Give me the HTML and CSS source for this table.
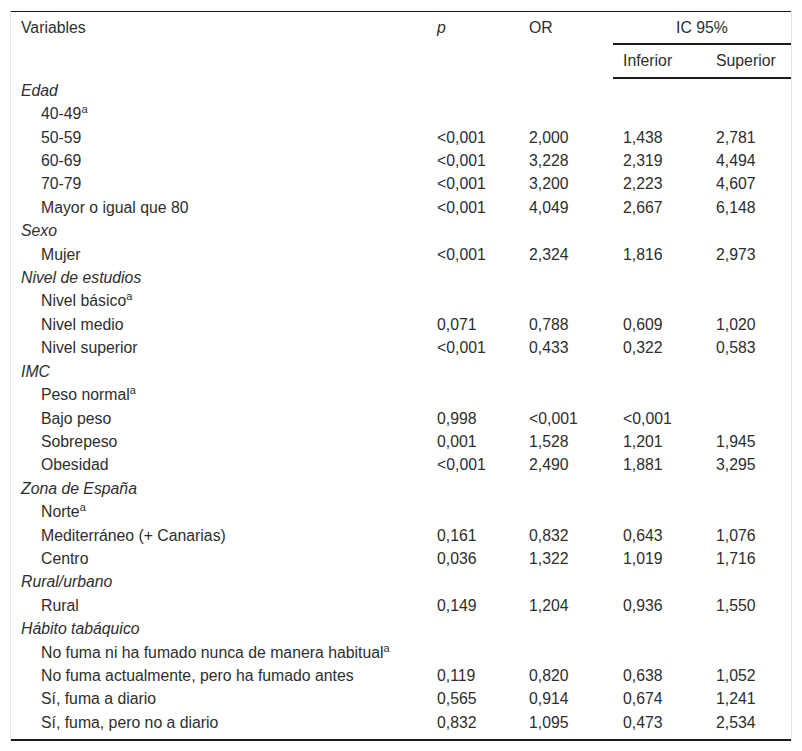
FILE: index.html
```html
<!DOCTYPE html>
<html lang="es">
<head>
<meta charset="utf-8">
<title>Tabla</title>
<link rel="stylesheet" href="styles.css">
</head>
<body>
<div class="wrap">
<table class="tbl">
<colgroup>
<col class="c-var"><col class="c-p"><col class="c-or"><col class="c-inf"><col class="c-sup">
</colgroup>
<thead>
<tr class="h1">
<th rowspan="2">Variables</th>
<th rowspan="2"><i>p</i></th>
<th rowspan="2">OR</th>
<th colspan="2" class="ic">IC 95%</th>
</tr>
<tr class="h2">
<th>Inferior</th>
<th>Superior</th>
</tr>
</thead>
<tbody>
<tr><td class="grp" colspan="5">Edad</td></tr>
<tr><td class="sub">40-49<sup>a</sup></td><td></td><td></td><td></td><td></td></tr>
<tr><td class="sub">50-59</td><td>&lt;0,001</td><td>2,000</td><td>1,438</td><td>2,781</td></tr>
<tr><td class="sub">60-69</td><td>&lt;0,001</td><td>3,228</td><td>2,319</td><td>4,494</td></tr>
<tr><td class="sub">70-79</td><td>&lt;0,001</td><td>3,200</td><td>2,223</td><td>4,607</td></tr>
<tr><td class="sub">Mayor o igual que 80</td><td>&lt;0,001</td><td>4,049</td><td>2,667</td><td>6,148</td></tr>
<tr><td class="grp" colspan="5">Sexo</td></tr>
<tr><td class="sub">Mujer</td><td>&lt;0,001</td><td>2,324</td><td>1,816</td><td>2,973</td></tr>
<tr><td class="grp" colspan="5">Nivel de estudios</td></tr>
<tr><td class="sub">Nivel básico<sup>a</sup></td><td></td><td></td><td></td><td></td></tr>
<tr><td class="sub">Nivel medio</td><td>0,071</td><td>0,788</td><td>0,609</td><td>1,020</td></tr>
<tr><td class="sub">Nivel superior</td><td>&lt;0,001</td><td>0,433</td><td>0,322</td><td>0,583</td></tr>
<tr><td class="grp" colspan="5">IMC</td></tr>
<tr><td class="sub">Peso normal<sup>a</sup></td><td></td><td></td><td></td><td></td></tr>
<tr><td class="sub">Bajo peso</td><td>0,998</td><td>&lt;0,001</td><td>&lt;0,001</td><td></td></tr>
<tr><td class="sub">Sobrepeso</td><td>0,001</td><td>1,528</td><td>1,201</td><td>1,945</td></tr>
<tr><td class="sub">Obesidad</td><td>&lt;0,001</td><td>2,490</td><td>1,881</td><td>3,295</td></tr>
<tr><td class="grp" colspan="5">Zona de España</td></tr>
<tr><td class="sub">Norte<sup>a</sup></td><td></td><td></td><td></td><td></td></tr>
<tr><td class="sub">Mediterráneo (+ Canarias)</td><td>0,161</td><td>0,832</td><td>0,643</td><td>1,076</td></tr>
<tr><td class="sub">Centro</td><td>0,036</td><td>1,322</td><td>1,019</td><td>1,716</td></tr>
<tr><td class="grp" colspan="5">Rural/urbano</td></tr>
<tr><td class="sub">Rural</td><td>0,149</td><td>1,204</td><td>0,936</td><td>1,550</td></tr>
<tr><td class="grp" colspan="5">Hábito tabáquico</td></tr>
<tr><td class="sub">No fuma ni ha fumado nunca de manera habitual<sup>a</sup></td><td></td><td></td><td></td><td></td></tr>
<tr><td class="sub">No fuma actualmente, pero ha fumado antes</td><td>0,119</td><td>0,820</td><td>0,638</td><td>1,052</td></tr>
<tr><td class="sub">Sí, fuma a diario</td><td>0,565</td><td>0,914</td><td>0,674</td><td>1,241</td></tr>
<tr class="last"><td class="sub">Sí, fuma, pero no a diario</td><td>0,832</td><td>1,095</td><td>0,473</td><td>2,534</td></tr>
</tbody>
</table>
</div>
</body>
</html>
```

FILE: styles.css
```css
html, body {
  margin: 0;
  padding: 0;
  background: #fff;
}
body {
  font-family: "Liberation Sans", Arial, sans-serif;
  font-size: 15.8px;
  color: #2e2e2e;
}
.wrap {
  margin: 11px 10px 0 10px;
  width: 780px;
  border-left: 1px solid #e4e4e4;
  border-right: 1px solid #e4e4e4;
}
.tbl {
  width: 100%;
  border-collapse: collapse;
  table-layout: fixed;
  border-top: 1px solid #1a1a1a;
  border-bottom: 2px solid #1a1a1a;
}
.c-var { width: 416px; }
.c-p { width: 92px; }
.c-or { width: 94px; }
.c-inf { width: 93px; }
.c-sup { width: 85px; }
.tbl th, .tbl td {
  padding: 0 0 0 10px;
  text-align: left;
  vertical-align: top;
  line-height: 23.4px;
  font-weight: normal;
  white-space: nowrap;
}
.tbl thead th {
  padding-top: 4px;
  padding-bottom: 4px;
}
.tbl thead .h1 th.ic {
  text-align: center;
  padding-left: 0;
  border-bottom: 2px solid #1a1a1a;
}
.tbl thead .h2 th {
  border-bottom: 2px solid #1a1a1a;
}
.tbl .grp {
  font-style: italic;
}
.tbl .sub {
  padding-left: 30px;
}
.tbl sup {
  font-size: 11px;
  line-height: 0;
  vertical-align: 6px;
}
.tbl .last td {
  padding-bottom: 5px;
}
```
